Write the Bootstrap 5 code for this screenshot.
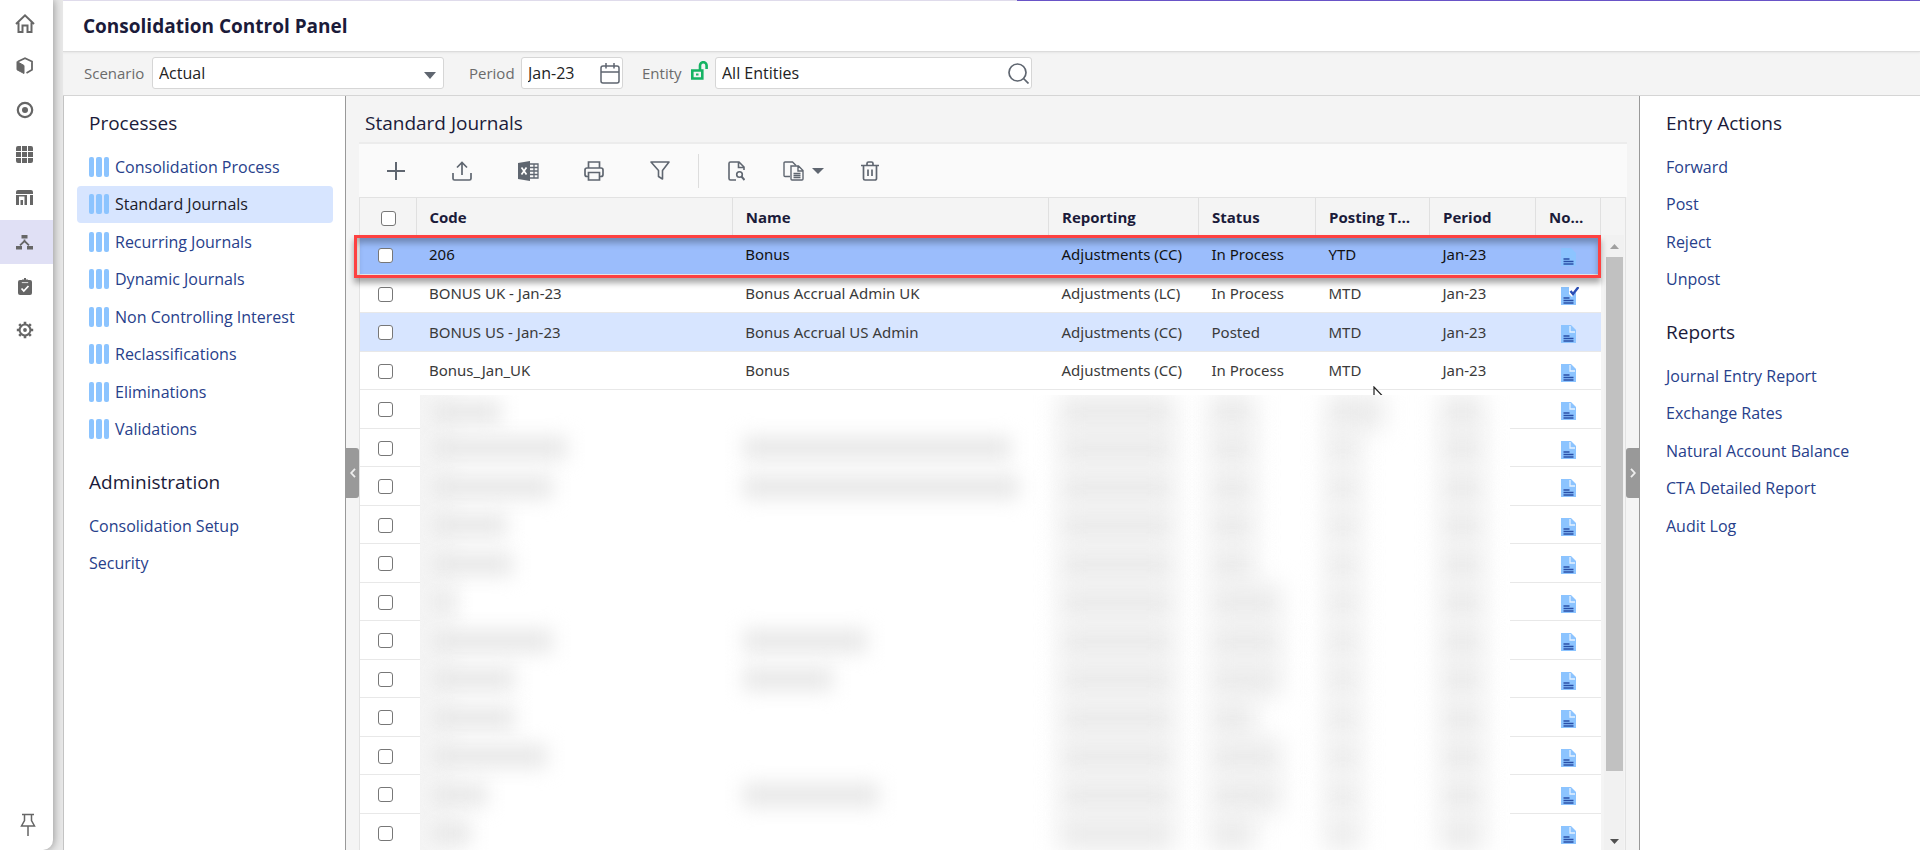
<!DOCTYPE html>
<html lang="en">
<head>
<meta charset="utf-8">
<meta name="viewport" content="width=device-width, initial-scale=1">
<title>Consolidation Control Panel</title>
<link href="https://cdn.jsdelivr.net/npm/bootstrap@5.3.0/dist/css/bootstrap.min.css" rel="stylesheet">
<style>
  body { font-family: "Open Sans", "Noto Sans", sans-serif; font-size: 15px; line-height: 20px; color: #333; background: #e8e8e8; }
  svg { display: block; flex: none; }
  a { text-decoration: none; }

  .rail { width: 53px; background: #fff; border-bottom-right-radius: 10px; box-shadow: 1px 0 8px rgba(0,0,0,.35); z-index: 2; color: #666; }
  .rail a { height: 44px; color: #666; padding-right: 4px; }
  .rail a.active { background: #e0e0f5; }
  .rail .pin { height: 50px; padding: 0 0 0 3px; }

  .app { margin-left: 10px; background: #f4f4f4; }
  .accent { height: 1px; background: linear-gradient(90deg, #e0dcec 0 954px, #6a55c8 954px); }
  .titlebar { height: 51px; background: #fff; border-bottom: 1px solid #dcdcdc; padding: 0 20px; z-index: 1; box-shadow: 0 1px 2px rgba(0,0,0,.06); }
  .titlebar h1 { font-size: 19px; line-height: 26px; font-weight: 700; color: #1b1b3a; }

  .filters { height: 44px; border-bottom: 1px solid #d5d5d5; padding: 5px 21px; color: #6b6b6b; }
  .filters label { line-height: 33px; }
  .fld { height: 32px; border: 1px solid #d6d6d6; border-radius: 3px; background: #fff; color: #222; font-size: 16px; font-weight: 500; padding: 0 6px 1px; width: 100%; }
  .fld-select { appearance: none; }
  .box { position: relative; }
  .box svg { position: absolute; top: 6px; right: 3px; pointer-events: none; }
  .box svg.down { top: 15px; right: 8px; }
  .l-scen { width: 68px; } .w-scen { width: 292px; margin-right: 25px; }
  .l-per { width: 52px; } .w-per { width: 102px; margin-right: 19px; }
  .l-ent { width: 49px; } .w-ent { width: 317px; margin-left: 7px; }

  .side { background: #fff; overflow: hidden; }
  .side-left { width: 283px; border-left: 1px solid #c4c4c4; border-right: 1px solid #999; padding: 0 12px 0 13px; }
  .side-right { width: 281px; border-left: 1px solid #999; padding: 0 12px 0 14px; }
  .side h2, .center h2 { font-size: 19px; line-height: 24px; font-weight: 500; color: #1b1b3a; margin: 0; }
  .side h2 { padding: 15px 12px 14px; }
  .side ul + h2 { padding: 21px 12px 14px; }
  .side a { height: 37px; padding: 0 12px 1px; gap: 6px; font-size: 16px; color: #27408b; font-weight: 500; border-radius: 4px; white-space: nowrap; }
  .side li:nth-child(even) { padding-bottom: 1px; }
  .side a.active { background: #d7e5ff; color: #1b1b2a; }
  .bars { width: 20px; height: 20px; gap: 2px; flex: none; }
  .bars i { flex: 1 1 0; background: #8cc4ff; border-radius: 2px; }

  .center { position: relative; padding: 0 13px; }
  .center h2 { padding: 15px 6px 7px; }
  .tools { height: 55px; border-top: 2px solid #ececec; background: #fafafa; padding: 0 4px; color: #5f6670; margin-right: -1px; }
  .tools .btn { width: 66px; height: 50px; padding: 0; color: inherit; border: 0; }
  .tools .btn.wide { width: 68px; }
  .tools .sep { width: 1px; height: 34px; background: #ddd; margin: 0 4px 0 5px; }

  .gridbox { border: 1px solid #e2e2e2; border-bottom: 0; background: #f4f4f4; min-height: 0; }
  .gridwrap { position: relative; background: #fff; }
  .journals { table-layout: fixed; width: 100%; margin: 0; color: #3a3a3a; font-family: "Noto Sans", "Open Sans", sans-serif; }
  .journals th, .journals td { white-space: nowrap; overflow: hidden; text-overflow: ellipsis; padding: 0 13px; vertical-align: middle; }
  .journals th { height: 37px; background: #f4f4f4; color: #1b1b3a; font-family: "Open Sans", sans-serif; font-weight: 700; font-size: 15px; border-right: 1px solid #e0e0e0; }
  .journals td { height: 38px; border-bottom: 1px solid #e8e8e8; }
  .journals tbody tr:nth-child(odd) td { height: 39px; }
  .journals .c-check { padding: 2px 0 0 18px; }
  .journals th.c-check { padding: 4px 0 0 21px; }
  .journals .c-note { padding: 5px 0 0 25px; }
  .journals tr.picked td { background: #9bbdfc; color: #111; }
  .journals tr.posted td { background: #d7e5ff; }
  .tick { appearance: none; display: block; width: 15px; height: 15px; margin: 0; border: 1px solid #777; border-radius: 3px; background: #fff; }
  .tick:checked { background: #2a6fdb; }

  .callout-box { position: absolute; left: -6px; right: 0; top: 37px; height: 43px; border: 3px solid #fd4141; box-shadow: 0 5px 6px rgba(0,0,0,.35), inset 0 5px 6px rgba(0,0,0,.28); pointer-events: none; }
  .pointer { position: absolute; top: 188px; right: 216px; }

  .veil { position: absolute; left: 60px; right: 91px; top: 197px; bottom: 0; background: linear-gradient(90deg, #f5f5f5, #fff 50px); overflow: hidden; }
  .veil .line { display: grid; grid-template-columns: 312px 316px 150px 117px 114px 1fr; height: 38px; align-items: center; }
  .veil .line:nth-child(odd) { height: 39px; }
  .veil .line:first-child { height: 34px; }
  .veil .smudge { height: 22px; margin-left: 11px; background: #e6e6e6; filter: blur(10px); }
  .veil .tight { height: 34px; background: #eaeaea; filter: blur(12px); }

  .scroller { width: 24px; padding: 37px 1px 0 3px; }
  .scroller .track { background: #f1f1f1; color: #a0a0a0; padding: 0 1px 0 2px; }
  .scroller .thumb { height: 514px; background: #c1c1c1; }
  .scroller .arrow { height: 22px; flex: none; }
  .handle { position: absolute; top: 352px; width: 13px; height: 50px; background: #999; border: 0; padding: 0; color: #eee; }
  .handle-l { left: 0; border-radius: 0 3px 3px 0; }
  .handle-r { right: 0; border-radius: 3px 0 0 3px; }
</style>
</head>
<body>
<div class="d-flex vh-100 overflow-hidden">

  <nav class="rail d-flex flex-column flex-shrink-0" aria-label="Main">
    <a href="#" class="d-flex align-items-center justify-content-center" aria-label="Home">
      <svg width="20" height="22" viewBox="0 0 20 22" fill="none" stroke="currentColor" stroke-width="2"><path d="M1 13 10 4.300l9 8.700M3.500 11.500V21h4v-6.500h5V21h4v-9.500"/></svg></a>
    <a href="#" class="d-flex align-items-center justify-content-center" aria-label="Models">
      <svg width="18" height="18" viewBox="0 0 18 18"><path d="M1 4.500 8 8.500v8L1 12.800z" fill="currentColor" stroke="currentColor" stroke-linejoin="round"/><path d="M2 4.500 9 1.200l7 3.300v8.300L10.500 16" fill="none" stroke="currentColor" stroke-width="1.800"/></svg></a>
    <a href="#" class="d-flex align-items-center justify-content-center" aria-label="Targets">
      <svg width="18" height="18" viewBox="0 0 18 18"><circle cx="9" cy="9" r="7.200" fill="none" stroke="currentColor" stroke-width="2.200"/><circle cx="9" cy="9" r="3" fill="currentColor"/></svg></a>
    <a href="#" class="d-flex align-items-center justify-content-center" aria-label="Sheets">
      <svg width="17" height="17" viewBox="0 0 17 17" fill="currentColor"><path d="M0 2a2 2 0 0 1 2-2h3v5H0zM6 0h5v5H6zM12 0h3a2 2 0 0 1 2 2v3h-5zM0 6h5v5H0zM6 6h5v5H6zM12 6h5v5h-5zM0 12h5v5H2a2 2 0 0 1-2-2zM6 12h5v5H6zM12 12h5v3a2 2 0 0 1-2 2h-3z"/></svg></a>
    <a href="#" class="d-flex align-items-center justify-content-center" aria-label="Reports">
      <svg width="17" height="16" viewBox="0 0 17 16" fill="currentColor"><path d="M0 2a2 2 0 0 1 2-2h13a2 2 0 0 1 2 2v2H0zM0 5h11v1.500H3V15H0zM4.500 10H7v5H4.500zM8.500 6H11v9H8.500zM14 5h3v10h-3z"/></svg></a>
    <a href="#" class="active d-flex align-items-center justify-content-center" aria-label="Consolidation" aria-current="page">
      <svg width="17" height="16" viewBox="0 0 17 16"><path d="M5.500 1h6v3.500h-6zM0 12h6v3.500H0zM11 12h6v3.500h-6z" fill="currentColor"/><path d="M8.500 5.500V7M4 11.300 8.500 7l4.500 4.300" fill="none" stroke="currentColor" stroke-width="1.800"/></svg></a>
    <a href="#" class="d-flex align-items-center justify-content-center" aria-label="Tasks">
      <svg width="14" height="17" viewBox="0 0 14 17"><rect y="2" width="14" height="15" rx="2" fill="currentColor"/><path d="M4 1.500h6V4H4zM6 0h2v2H6z" fill="currentColor"/><path d="M3.800 4.600h6.400" stroke="#fff" stroke-width=".8"/><path d="m3.500 10.500 2.300 2.500 4.700-5" fill="none" stroke="#fff" stroke-width="1.800"/></svg></a>
    <a href="#" class="d-flex align-items-center justify-content-center" aria-label="Settings">
      <svg width="18" height="18" viewBox="0 0 18 18" fill="none" stroke="currentColor"><circle cx="9" cy="9" r="5.400" stroke-width="2"/><circle cx="9" cy="9" r="1.900" fill="currentColor" stroke="none"/><path d="M9 .8v2.600M9 14.600v2.600M.8 9h2.600M14.600 9h2.600M3.200 3.200l1.900 1.900M12.900 12.900l1.900 1.900M3.200 14.800l1.900-1.900M12.900 5.100l1.900-1.900" stroke-width="2.600"/></svg></a>
    <a href="#" class="pin mt-auto d-flex align-items-center justify-content-center" aria-label="Pin menu">
      <svg width="16" height="24" viewBox="0 0 16 24" fill="none" stroke="currentColor" stroke-width="1.500"><path d="M2 1.500h12M4.500 2v5.500L1.500 13h13l-3-5.500V2M8 13v10"/></svg></a>
  </nav>

  <div class="app d-flex flex-column flex-grow-1 overflow-hidden">
    <div class="accent flex-shrink-0"></div>
    <header class="titlebar d-flex align-items-center flex-shrink-0"><h1 class="m-0">Consolidation Control Panel</h1></header>

    <form class="filters d-flex flex-shrink-0">
      <label for="scenario" class="l-scen">Scenario</label>
      <div class="box w-scen">
        <select id="scenario" class="fld fld-select"><option>Actual</option></select>
        <svg class="down" width="12" height="7" viewBox="0 0 12 7"><path d="M0 0h12L6 7z" fill="#5f6670"/></svg>
      </div>
      <label for="period" class="l-per">Period</label>
      <div class="box w-per">
        <input id="period" class="fld" value="Jan-23">
        <svg width="20" height="21" viewBox="0 0 20 21" fill="none" stroke="#5f6670" stroke-width="1.500"><rect x="1" y="3" width="18" height="17" rx="2"/><path d="M1 9h18M6 0v5.500M14 0v5.500"/></svg>
      </div>
      <label for="entity" class="l-ent">Entity</label>
      <svg width="17" height="19" viewBox="0 0 17 19" class="mt-1" fill="none" stroke="#16b364" stroke-width="2.600"><path d="M1.300 9.500h10v8h-10zM9 9V4.500a3.200 3.200 0 0 1 6.600 0V8"/><path d="M5 13.500h2.500" stroke-width="2"/></svg>
      <div class="box w-ent">
        <input id="entity" class="fld" value="All Entities">
        <svg width="21" height="21" viewBox="0 0 21 21" fill="none" stroke="#5f6670" stroke-width="1.700"><circle cx="9.500" cy="9.500" r="8.500"/><path d="m15.500 15.500 5 5"/></svg>
      </div>
    </form>

    <div class="d-flex flex-grow-1 overflow-hidden">
      <aside class="side side-left flex-shrink-0">
        <h2>Processes</h2>
        <ul class="list-unstyled m-0">
          <li><a class="d-flex align-items-center" href="#"><span class="bars d-flex"><i></i><i></i><i></i></span>Consolidation Process</a></li>
          <li><a class="d-flex align-items-center active" href="#"><span class="bars d-flex"><i></i><i></i><i></i></span>Standard Journals</a></li>
          <li><a class="d-flex align-items-center" href="#"><span class="bars d-flex"><i></i><i></i><i></i></span>Recurring Journals</a></li>
          <li><a class="d-flex align-items-center" href="#"><span class="bars d-flex"><i></i><i></i><i></i></span>Dynamic Journals</a></li>
          <li><a class="d-flex align-items-center" href="#"><span class="bars d-flex"><i></i><i></i><i></i></span>Non Controlling Interest</a></li>
          <li><a class="d-flex align-items-center" href="#"><span class="bars d-flex"><i></i><i></i><i></i></span>Reclassifications</a></li>
          <li><a class="d-flex align-items-center" href="#"><span class="bars d-flex"><i></i><i></i><i></i></span>Eliminations</a></li>
          <li><a class="d-flex align-items-center" href="#"><span class="bars d-flex"><i></i><i></i><i></i></span>Validations</a></li>
        </ul>
        <h2>Administration</h2>
        <ul class="list-unstyled m-0">
          <li><a class="d-flex align-items-center" href="#">Consolidation Setup</a></li>
          <li><a class="d-flex align-items-center" href="#">Security</a></li>
        </ul>
      </aside>

      <main class="center d-flex flex-column flex-grow-1 overflow-hidden">
        <button class="handle handle-l d-flex align-items-center justify-content-center" aria-label="Collapse processes"><svg width="6" height="10" viewBox="0 0 6 10" fill="none" stroke="currentColor" stroke-width="1.800"><path d="M5 .8 1.200 5 5 9.200"/></svg></button>
        <button class="handle handle-r d-flex align-items-center justify-content-center" aria-label="Collapse actions"><svg width="6" height="10" viewBox="0 0 6 10" fill="none" stroke="currentColor" stroke-width="1.800"><path d="M1 .8 4.800 5 1 9.200"/></svg></button>
        <h2>Standard Journals</h2>
        <div class="tools d-flex align-items-center flex-shrink-0">
          <button class="btn d-flex align-items-center justify-content-center" aria-label="Add"><svg width="18" height="18" viewBox="0 0 18 18" stroke="currentColor" stroke-width="2"><path d="M9 0v18M0 9h18"/></svg></button>
          <button class="btn d-flex align-items-center justify-content-center" aria-label="Upload"><svg width="20" height="20" viewBox="0 0 20 20" fill="none" stroke="currentColor" stroke-width="1.700"><path d="M10 14V2M5 6.500l5-5 5 5M1 12v5.500a1.500 1.500 0 0 0 1.500 1.500h15a1.500 1.500 0 0 0 1.500-1.500V12"/></svg></button>
          <button class="btn d-flex align-items-center justify-content-center" aria-label="Export to Excel"><svg width="21" height="20" viewBox="0 0 21 20"><path d="M0 2 12 0v20L0 18z" fill="currentColor"/><path d="M12 3h8v14h-8M12 6.500h8M12 10h8M12 13.500h8M16 3v14" fill="none" stroke="currentColor" stroke-width="1.300"/><path d="m3.500 6.500 5 7M8.500 6.500l-5 7" stroke="#fff" stroke-width="1.700"/></svg></button>
          <button class="btn d-flex align-items-center justify-content-center" aria-label="Print"><svg width="20" height="20" viewBox="0 0 20 20" fill="none" stroke="currentColor" stroke-width="1.700"><path d="M4.500 7V1h11v6M4.500 15.500H3a2 2 0 0 1-2-2V9a2 2 0 0 1 2-2h14a2 2 0 0 1 2 2v4.500a2 2 0 0 1-2 2h-1.500M4.500 11.500h11V19h-11z"/></svg></button>
          <button class="btn d-flex align-items-center justify-content-center" aria-label="Filter"><svg width="20" height="19" viewBox="0 0 20 19" fill="none" stroke="currentColor" stroke-width="1.600" stroke-linejoin="round"><path d="M1 1h18l-6.500 8.500V18l-4-2.500v-6z"/></svg></button>
          <span class="sep"></span>
          <button class="btn d-flex align-items-center justify-content-center" aria-label="Preview"><svg width="17" height="20" viewBox="0 0 17 20" fill="none" stroke="currentColor" stroke-width="1.600"><path d="M8 19H2.500A1.500 1.500 0 0 1 1 17.500v-15A1.500 1.500 0 0 1 2.500 1H11l5 5v3M10.500 1v5.500H16"/><circle cx="11.500" cy="13.500" r="2.800"/><path d="m13.500 15.500 3 3.500" stroke-width="2"/></svg></button>
          <button class="btn wide d-flex align-items-center justify-content-center gap-2" aria-label="Copy"><svg width="21" height="20" viewBox="0 0 21 20" fill="none" stroke="currentColor" stroke-width="1.400"><path d="M7 15.500H2A1 1 0 0 1 1 14.500V2a1 1 0 0 1 1-1h7.500L13 4.500"/><path d="M8 5h7.500L20 9.500V18a1 1 0 0 1-1 1H9a1 1 0 0 1-1-1zM15 5v5h5M10.500 12.500h7M10.500 14.500h7M10.500 16.500h7"/></svg><svg width="12" height="6" viewBox="0 0 12 6"><path d="M0 0h12L6 6z" fill="currentColor"/></svg></button>
          <button class="btn d-flex align-items-center justify-content-center" aria-label="Delete"><svg width="18" height="20" viewBox="0 0 18 20" fill="none" stroke="currentColor" stroke-width="1.700"><path d="M0 4.500h18M6 4V2.500A1.500 1.500 0 0 1 7.500 1h3A1.500 1.500 0 0 1 12 2.500V4M2.500 5v12.500A1.500 1.500 0 0 0 4 19h10a1.500 1.500 0 0 0 1.500-1.500V5M7 8.500v6.500M11 8.500v6.500"/></svg></button>
        </div>

        <div class="gridbox d-flex flex-grow-1">
          <div class="gridwrap flex-grow-1">
            <table class="journals">
              <colgroup><col style="width:56px"><col><col><col style="width:150px"><col style="width:117px"><col style="width:114px"><col style="width:106px"><col style="width:65px"></colgroup>
              <thead>
                <tr><th class="c-check"><input type="checkbox" class="tick" aria-label="Select all"></th><th>Code</th><th>Name</th><th>Reporting</th><th>Status</th><th>Posting Type</th><th>Period</th><th>Notes</th></tr>
              </thead>
              <tbody id="rows"></tbody>
            </table>
            <div class="callout-box"></div>
            <svg class="pointer" width="12" height="18" viewBox="0 0 12 18"><path d="M1 1v14l3.500-3.500H11z" fill="#fff" stroke="#222" stroke-width="1.200"/></svg>
            <div class="veil" id="veil" aria-hidden="true"></div>
          </div>
          <div class="scroller d-flex flex-shrink-0">
            <div class="track flex-grow-1 d-flex flex-column">
              <div class="arrow d-flex align-items-center justify-content-center"><svg width="9" height="5" viewBox="0 0 9 5"><path d="M0 5h9L4.500 0z" fill="#a0a0a0"/></svg></div>
              <div class="thumb"></div>
              <div class="arrow mt-auto d-flex align-items-center justify-content-center pt-1"><svg width="9" height="5" viewBox="0 0 9 5"><path d="M0 0h9L4.500 5z" fill="#505050"/></svg></div>
            </div>
          </div>
        </div>
      </main>

      <aside class="side side-right flex-shrink-0">
        <h2>Entry Actions</h2>
        <ul class="list-unstyled m-0">
          <li><a class="d-flex align-items-center" href="#">Forward</a></li>
          <li><a class="d-flex align-items-center" href="#">Post</a></li>
          <li><a class="d-flex align-items-center" href="#">Reject</a></li>
          <li><a class="d-flex align-items-center" href="#">Unpost</a></li>
        </ul>
        <h2>Reports</h2>
        <ul class="list-unstyled m-0">
          <li><a class="d-flex align-items-center" href="#">Journal Entry Report</a></li>
          <li><a class="d-flex align-items-center" href="#">Exchange Rates</a></li>
          <li><a class="d-flex align-items-center" href="#">Natural Account Balance</a></li>
          <li><a class="d-flex align-items-center" href="#">CTA Detailed Report</a></li>
          <li><a class="d-flex align-items-center" href="#">Audit Log</a></li>
        </ul>
      </aside>
    </div>
  </div>
</div>

<script src="https://cdn.jsdelivr.net/npm/bootstrap@5.3.0/dist/js/bootstrap.bundle.min.js"></script>
<script>
  const entries = [
    ['206', 'Bonus', 'Adjustments (CC)', 'In Process', 'YTD', 'Jan-23', 'picked'],
    ['BONUS UK - Jan-23', 'Bonus Accrual Admin UK', 'Adjustments (LC)', 'In Process', 'MTD', 'Jan-23', ''],
    ['BONUS US - Jan-23', 'Bonus Accrual US Admin', 'Adjustments (CC)', 'Posted', 'MTD', 'Jan-23', 'posted'],
    ['Bonus_Jan_UK', 'Bonus', 'Adjustments (CC)', 'In Process', 'MTD', 'Jan-23', '']
  ];
  // widths of the hidden values: code, name, status
  const hidden = [[70,0,46],[136,268,46],[122,276,46],[76,0,46],[82,0,46],[24,0,72],[122,124,72],[84,90,72],[84,0,46],[116,0,72],[56,136,72],[40,0,46]];

  const page = (noted, picked) => `<svg width="18" height="18" viewBox="0 0 18 18"><path d="M0 0h10L15 5v13H0z" fill="#8cc4ff"/>` +
    (noted ? '<path d="M8 0h7v5l-4 5-3-3z" fill="#fff"/><path d="m9.500 4 2.500 3L17.500 0" fill="none" stroke="#2a4db5" stroke-width="2.400"/>'
           : picked ? '' : '<path d="M9 1v6h5" fill="none" stroke="#e6f2ff" stroke-width="1.300"/>') +
    '<path d="M2.500 11h6M2.500 13.500h10M2.500 16h10" stroke="#2a4fa8" stroke-width="1.400"/></svg>';
  const tick = n => `<td class="c-check"><input type="checkbox" class="tick" aria-label="Select row ${n}"></td>`;

  let html = entries.map((e, i) => `<tr class="${e[6]}">${tick(i + 1)}${e.slice(0, 6).map(t => `<td>${t}</td>`).join('')}<td class="c-note">${page(i === 1, i === 0)}</td></tr>`).join('');
  html += hidden.map((h, i) => `<tr>${tick(i + 5)}${'<td></td>'.repeat(6)}<td class="c-note">${page(false, false)}</td></tr>`).join('');
  document.getElementById('rows').innerHTML = html;

  const bar = (w, tight) => `<div>${w ? `<div class="smudge ${tight ? 'tight' : ''}" style="width:${w}px"></div>` : ''}</div>`;
  document.getElementById('veil').innerHTML = hidden.map((h, i) =>
    `<div class="line">${bar(h[0])}${bar(h[1])}${bar(116, 1)}${bar(h[2], 1)}${bar(i ? 34 : 58, 1)}${bar(44, 1)}</div>`).join('');
</script>
</body>
</html>
